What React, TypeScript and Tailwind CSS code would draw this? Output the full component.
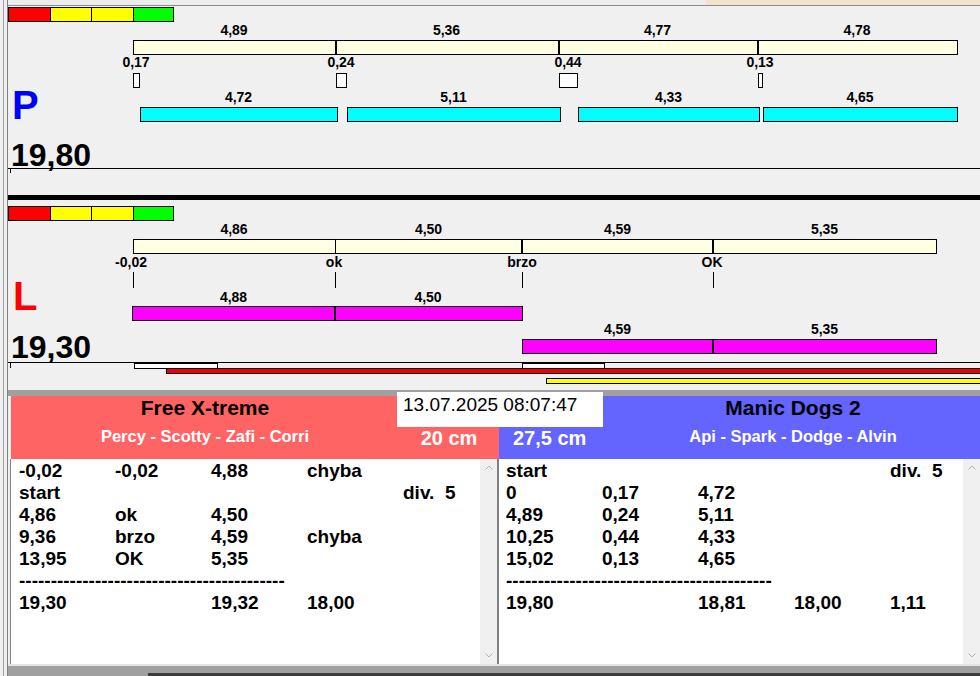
import React from "react";

const X0 = 8;

type RectSpec = { x1: number; x2: number; y1: number; y2: number; c: string };
type LabelSpec = { cx: number; cy: number; t: string };

const RED = "border border-black bg-[#ff0000]";
const YEL = "border border-black bg-[#ffff00]";
const GRN = "border border-black bg-[#00ff00]";
const CREAM = "border border-black bg-[#ffffe1]";
const WHITE = "border border-black bg-white";
const CYAN = "border border-black bg-[#00ffff]";
const MAG = "border border-black bg-[#ff00ff]";
const LINE = "bg-black";
const REDBAR = "border border-black bg-[#ee0000]";

function Rect({ r, top }: { r: RectSpec; top: number }) {
  return (
    <div
      className={"absolute box-border " + r.c}
      style={{ left: r.x1 - X0, top: r.y1 - top, width: r.x2 - r.x1 + 1, height: r.y2 - r.y1 + 1 }}
    />
  );
}

function Label({ l, top }: { l: LabelSpec; top: number }) {
  return (
    <div
      className="absolute -translate-x-1/2 whitespace-nowrap text-[14px] leading-[16px] font-bold text-black"
      style={{ left: l.cx - X0, top: l.cy - 8 - top }}
    >
      {l.t}
    </div>
  );
}

function colorBar(y1: number, y2: number): RectSpec[] {
  return [
    { x1: 8, x2: 50, y1, y2, c: RED },
    { x1: 50, x2: 91, y1, y2, c: YEL },
    { x1: 91, x2: 133, y1, y2, c: YEL },
    { x1: 133, x2: 173, y1, y2, c: GRN },
  ];
}

const P1 = 6;
const p1Rects: RectSpec[] = [
  ...colorBar(7, 21),
  { x1: 133, x2: 957, y1: 40, y2: 54, c: CREAM },
  { x1: 335, x2: 336, y1: 40, y2: 54, c: LINE },
  { x1: 558, x2: 559, y1: 40, y2: 54, c: LINE },
  { x1: 757, x2: 758, y1: 40, y2: 54, c: LINE },
  { x1: 133, x2: 139, y1: 73, y2: 87, c: WHITE },
  { x1: 336, x2: 346, y1: 73, y2: 87, c: WHITE },
  { x1: 559, x2: 577, y1: 73, y2: 87, c: WHITE },
  { x1: 758, x2: 762, y1: 73, y2: 87, c: WHITE },
  { x1: 140, x2: 337, y1: 107, y2: 121, c: CYAN },
  { x1: 347, x2: 560, y1: 107, y2: 121, c: CYAN },
  { x1: 578, x2: 759, y1: 107, y2: 121, c: CYAN },
  { x1: 763, x2: 957, y1: 107, y2: 121, c: CYAN },
  { x1: 8, x2: 990, y1: 168, y2: 168, c: LINE },
  { x1: 10, x2: 10, y1: 168, y2: 172, c: LINE },
];
const p1Labels: LabelSpec[] = [
  { cx: 234, cy: 30, t: "4,89" },
  { cx: 446.5, cy: 30, t: "5,36" },
  { cx: 657.5, cy: 30, t: "4,77" },
  { cx: 857, cy: 30, t: "4,78" },
  { cx: 136, cy: 62, t: "0,17" },
  { cx: 341, cy: 62, t: "0,24" },
  { cx: 568, cy: 62, t: "0,44" },
  { cx: 760, cy: 62, t: "0,13" },
  { cx: 238.5, cy: 97, t: "4,72" },
  { cx: 453.5, cy: 97, t: "5,11" },
  { cx: 668.5, cy: 97, t: "4,33" },
  { cx: 860, cy: 97, t: "4,65" },
];

const P2 = 200;
const p2Rects: RectSpec[] = [
  ...colorBar(206, 220),
  { x1: 133, x2: 936, y1: 239, y2: 253, c: CREAM },
  { x1: 335, x2: 335, y1: 239, y2: 253, c: LINE },
  { x1: 521, x2: 522, y1: 239, y2: 253, c: LINE },
  { x1: 712, x2: 713, y1: 239, y2: 253, c: LINE },
  { x1: 133, x2: 133, y1: 272, y2: 287, c: LINE },
  { x1: 335, x2: 335, y1: 272, y2: 287, c: LINE },
  { x1: 522, x2: 522, y1: 272, y2: 287, c: LINE },
  { x1: 713, x2: 713, y1: 272, y2: 287, c: LINE },
  { x1: 132, x2: 522, y1: 306, y2: 320, c: MAG },
  { x1: 334, x2: 335, y1: 306, y2: 320, c: LINE },
  { x1: 522, x2: 936, y1: 339, y2: 353, c: MAG },
  { x1: 712, x2: 713, y1: 339, y2: 353, c: LINE },
  { x1: 8, x2: 990, y1: 362, y2: 362, c: LINE },
  { x1: 10, x2: 10, y1: 362, y2: 367, c: LINE },
  { x1: 134, x2: 217, y1: 363, y2: 368, c: WHITE },
  { x1: 522, x2: 604, y1: 363, y2: 368, c: WHITE },
  { x1: 166, x2: 990, y1: 368, y2: 373, c: REDBAR },
  { x1: 546, x2: 990, y1: 378, y2: 383, c: YEL },
];
const p2Labels: LabelSpec[] = [
  { cx: 234, cy: 229, t: "4,86" },
  { cx: 428.5, cy: 229, t: "4,50" },
  { cx: 617.5, cy: 229, t: "4,59" },
  { cx: 824.5, cy: 229, t: "5,35" },
  { cx: 131, cy: 262, t: "-0,02" },
  { cx: 334, cy: 262, t: "ok" },
  { cx: 522, cy: 262, t: "brzo" },
  { cx: 712, cy: 262, t: "OK" },
  { cx: 233.5, cy: 297, t: "4,88" },
  { cx: 428, cy: 297, t: "4,50" },
  { cx: 617.5, cy: 329, t: "4,59" },
  { cx: 824.5, cy: 329, t: "5,35" },
];

const DASH = "------------------------------------------";

const leftRows: string[][] = [
  ["-0,02", "-0,02", "4,88", "chyba", ""],
  ["start", "", "", "", "div.  5"],
  ["4,86", "ok", "4,50", "", ""],
  ["9,36", "brzo", "4,59", "chyba", ""],
  ["13,95", "OK", "5,35", "", ""],
  [DASH],
  ["19,30", "", "19,32", "18,00", ""],
];

const rightRows: string[][] = [
  ["start", "", "", "", "div.  5"],
  ["0", "0,17", "4,72", "", ""],
  ["4,89", "0,24", "5,11", "", ""],
  ["10,25", "0,44", "4,33", "", ""],
  ["15,02", "0,13", "4,65", "", ""],
  [DASH],
  ["19,80", "", "18,81", "18,00", "1,11"],
];

function Rows({ rows }: { rows: string[][] }) {
  return (
    <div className="text-[19px] leading-[22px] font-bold whitespace-pre text-black">
      {rows.map((r, i) =>
        r.length === 1 ? (
          <div key={i} className="h-[22px]">
            {r[0]}
          </div>
        ) : (
          <div key={i} className="grid grid-cols-[96px_96px_96px_96px_auto] h-[22px]">
            {r.map((c, j) => (
              <div key={j}>{c}</div>
            ))}
          </div>
        )
      )}
    </div>
  );
}

function Scroll() {
  return (
    <div className="flex w-[17px] shrink-0 flex-col items-center justify-between bg-[#f0f0f0] pt-[6px] pb-[6px]">
      <svg width="8" height="5" viewBox="0 0 8 5">
        <polyline points="0.5,4.5 4,1 7.5,4.5" fill="none" stroke="#b4b4b4" strokeWidth="1" />
      </svg>
      <svg width="8" height="5" viewBox="0 0 8 5">
        <polyline points="0.5,0.5 4,4 7.5,0.5" fill="none" stroke="#b4b4b4" strokeWidth="1" />
      </svg>
    </div>
  );
}

export default function App() {
  return (
    <div className="flex w-[980px] h-[676px] overflow-hidden bg-[#f0f0f0] font-['Liberation_Sans',Arial,sans-serif] text-black">
      {/* left window frame */}
      <div className="flex w-[8px] shrink-0">
        <div className="w-[3px]" />
        <div className="w-px bg-[#a0a0a0]" />
        <div className="w-[3px]" />
        <div className="w-px bg-[#808080]" />
      </div>

      <div className="flex w-[972px] shrink-0 flex-col">
        {/* top strip */}
        <div className="flex h-[6px] border-b border-[#8c8c8c]">
          <div className="flex-1 bg-[#ececec]" />
          <div className="w-[274px] bg-[#f1e3ce]" />
        </div>

        {/* panel P */}
        <div className="relative h-[189px]">
          {p1Rects.map((r, i) => (
            <Rect key={i} r={r} top={P1} />
          ))}
          {p1Labels.map((l, i) => (
            <Label key={i} l={l} top={P1} />
          ))}
          <div className="absolute left-[4px] top-[79px] text-[40px] leading-[40px] font-bold text-[#0000ff]">P</div>
          <div className="absolute left-[3px] top-[133px] text-[32px] leading-[32px] font-bold">19,80</div>
        </div>

        <div className="h-[5px] bg-black" />

        {/* panel L */}
        <div className="relative h-[190px]">
          {p2Rects.map((r, i) => (
            <Rect key={i} r={r} top={P2} />
          ))}
          {p2Labels.map((l, i) => (
            <Label key={i} l={l} top={P2} />
          ))}
          <div className="absolute left-[5px] top-[76px] text-[40px] leading-[40px] font-bold text-[#ff0000]">L</div>
          <div className="absolute left-[3px] top-[131px] text-[32px] leading-[32px] font-bold">19,30</div>
        </div>

        <div className="h-[6px] bg-[#a0a0a0]" />

        {/* results */}
        <div className="relative flex h-[280px] flex-col">
          <div className="flex h-[63px] pl-[3px]">
            <div className="flex w-[488px] shrink-0 bg-[#ff6464]">
              <div className="flex w-[388px] shrink-0 flex-col items-center">
                <div className="text-[21px] leading-[24px] font-bold text-black">Free X-treme</div>
                <div className="mt-[6px] text-[16.5px] leading-[20px] font-bold text-white">Percy - Scotty - Zafi - Corri</div>
              </div>
              <div className="w-[100px] shrink-0 pt-[30px] text-center text-[20px] leading-[24px] font-bold text-white">20 cm</div>
            </div>
            <div className="flex min-w-0 flex-1 bg-[#6464ff]">
              <div className="w-[107px] shrink-0 pt-[30px] pl-[14px] text-[20px] leading-[24px] font-bold text-white">27,5 cm</div>
              <div className="flex min-w-0 flex-1 flex-col items-center">
                <div className="text-[21px] leading-[24px] font-bold text-black">Manic Dogs 2</div>
                <div className="mt-[6px] text-[16.5px] leading-[20px] font-bold text-white">Api - Spark - Dodge - Alvin</div>
              </div>
            </div>
          </div>

          <div className="flex h-[205px] pl-[2px]">
            <div className="flex w-[487px] shrink-0 border-l border-[#808080] bg-white">
              <div className="min-w-0 flex-1 overflow-hidden pl-[8px] pt-[1px]">
                <Rows rows={leftRows} />
              </div>
              <Scroll />
            </div>
            <div className="w-[2px] shrink-0 bg-[#808080]" />
            <div className="flex min-w-0 flex-1 bg-white">
              <div className="min-w-0 flex-1 overflow-hidden pl-[7px] pt-[1px]">
                <Rows rows={rightRows} />
              </div>
              <Scroll />
            </div>
          </div>

          <div className="flex h-[12px] flex-col">
            <div className="h-[2px] bg-[#e3e3e3]" />
            <div className="flex flex-1 flex-col justify-end bg-[#a0a0a0]">
              <div className="flex h-[3px]">
                <div className="w-[140px]" />
                <div className="flex-1 bg-[#3c3c3c]" />
              </div>
            </div>
          </div>

          {/* date overlay */}
          <div className="absolute left-[389px] top-[-4px] h-[35px] w-[206px] bg-white pl-[6px] pt-[2px] text-[19px] leading-[22px] whitespace-nowrap">
            13.07.2025 08:07:47
          </div>
        </div>
      </div>
    </div>
  );
}
